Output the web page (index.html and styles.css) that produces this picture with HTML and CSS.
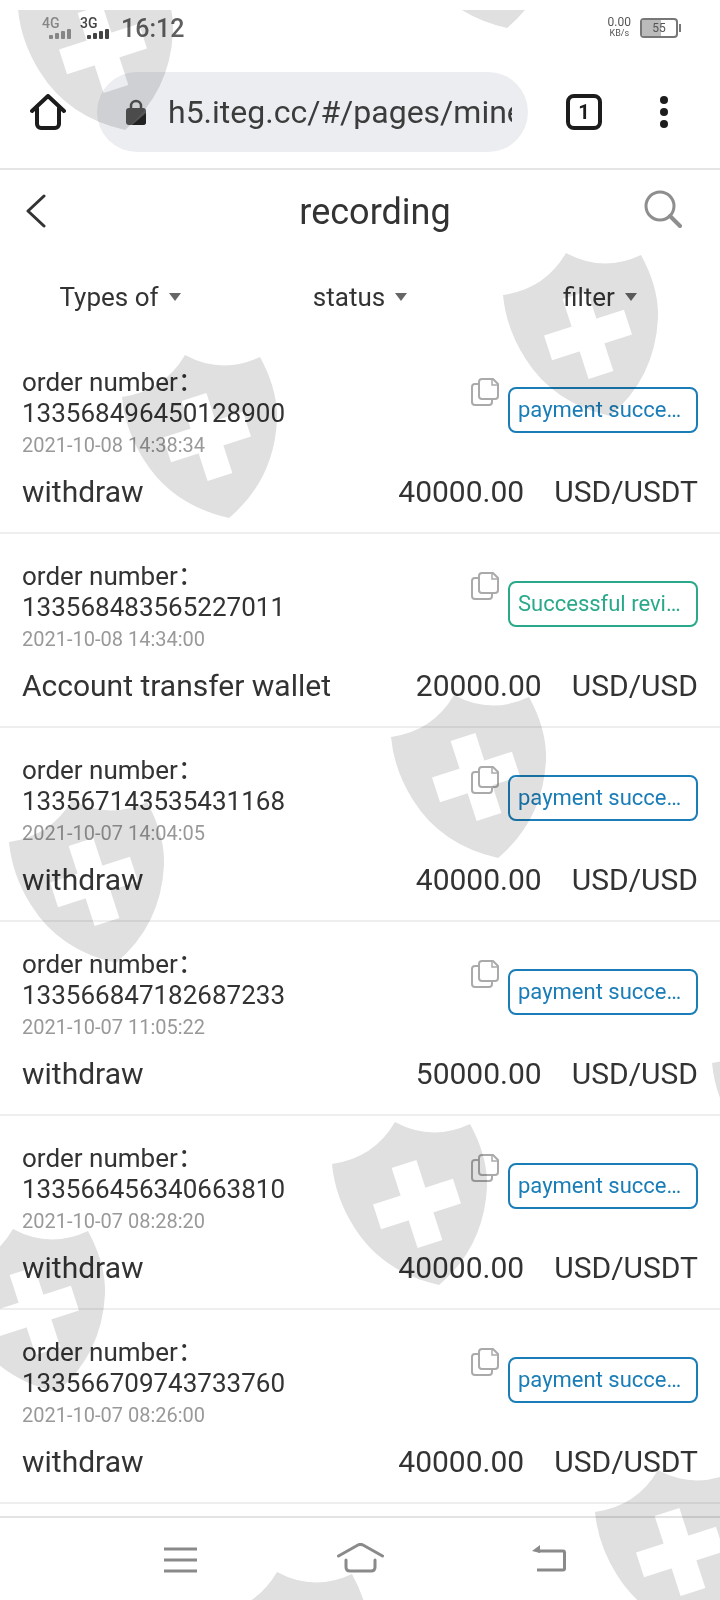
FILE: index.html
```html
<!DOCTYPE html>
<html lang="en">

<head>
  <meta charset="UTF-8">
  <title>recording</title>
  <link rel="stylesheet" href="styles.css">
</head>

<body>
  <svg class="defs" width="0" height="0">
    <symbol id="shield" viewBox="0 0 155 163">
      <path fill="#e0e0e0" d="M63 0 Q100 20 138 2 Q156 35 155 65 Q152 125 107 163 Q50 150 22 105 Q3 75 0 42 Q42 36 63 0Z" />
      <g transform="rotate(-18 85 82)" fill="#fff">
        <rect x="43" y="69" width="84" height="26" />
        <rect x="72" y="40" width="26" height="84" />
      </g>
    </symbol>
    <symbol id="copy" viewBox="0 0 28 28">
      <path fill="none" stroke="#aaa" stroke-width="2" stroke-linejoin="round" d="M9 6H4a3 3 0 0 0-3 3v15a3 3 0 0 0 3 3h14a3 3 0 0 0 3-3v-3" />
      <path fill="#fff" stroke="#aaa" stroke-width="2" stroke-linejoin="round" d="M11 1h11l5 5v12a3 3 0 0 1-3 3H11a3 3 0 0 1-3-3V4a3 3 0 0 1 3-3Z" />
      <path fill="none" stroke="#aaa" stroke-width="1.5" d="M21 1v6h6" />
    </symbol>
  </svg>

  <div class="page">
    <header class="chrome">
      <div class="status">
        <div class="signal signal-dim">
          <span class="net">4G</span>
          <span class="bars"><i></i><i></i><i></i><i></i></span>
        </div>
        <div class="signal">
          <span class="net">3G</span>
          <span class="bars"><i></i><i></i><i></i><i></i></span>
        </div>
        <span class="clock">16:12</span>
        <div class="speed"><span>0.00</span><small>KB/s</small></div>
        <div class="battery"><span class="battery-level"></span><span class="battery-text">55</span></div>
      </div>
      <div class="urlrow">
        <svg class="home-icon" viewBox="0 0 36 36">
          <path fill="none" stroke="#1c1c1c" stroke-width="4" stroke-linecap="round" stroke-linejoin="round" d="M2 17 18 2l16 15M7 14v16a4 4 0 0 0 4 4h14a4 4 0 0 0 4-4V14" />
        </svg>
        <div class="url">
          <svg class="lock" viewBox="0 0 20 26">
            <path fill="none" stroke="#555" stroke-width="2.5" d="M5 11V7a5 5 0 0 1 10 0v4" />
            <rect y="9" width="20" height="17" rx="3" fill="#555" />
            <path fill="#222" d="M20 14v9a3 3 0 0 1-3 3H6Z" />
          </svg>
          <span class="url-text">h5.iteg.cc/#/pages/mine</span>
        </div>
        <div class="tabs">1</div>
        <div class="dots"><i></i><i></i><i></i></div>
      </div>
    </header>

    <div class="titlebar">
      <svg class="back" viewBox="0 0 20 34">
        <path fill="none" stroke="#333" stroke-width="3" stroke-linecap="round" stroke-linejoin="round" d="M18 2 2 17l16 15" />
      </svg>
      <h1>recording</h1>
      <svg class="search" viewBox="0 0 38 38">
        <circle cx="16" cy="16" r="14" fill="none" stroke="#8e8e8e" stroke-width="3" />
        <path stroke="#8e8e8e" stroke-width="4" stroke-linecap="round" d="m26 26 10 10" />
      </svg>
    </div>

    <div class="filters">
      <div class="filter">Types of<i class="caret"></i></div>
      <div class="filter">status<i class="caret"></i></div>
      <div class="filter">filter<i class="caret"></i></div>
    </div>

    <main class="list">
      <article class="row">
        <div class="row-top">
          <div class="order">
            <div>order number：</div>
            <div>133568496450128900</div>
            <div class="date">2021-10-08 14:38:34</div>
          </div>
          <svg class="copy"><use href="#copy" /></svg>
          <div class="badge badge-blue">payment successful</div>
        </div>
        <div class="row-bottom">
          <span class="kind">withdraw</span>
          <span class="amount">40000.00</span>
          <span class="unit">USD/USDT</span>
        </div>
      </article>
      <article class="row">
        <div class="row-top">
          <div class="order">
            <div>order number：</div>
            <div>133568483565227011</div>
            <div class="date">2021-10-08 14:34:00</div>
          </div>
          <svg class="copy"><use href="#copy" /></svg>
          <div class="badge badge-green">Successful review</div>
        </div>
        <div class="row-bottom">
          <span class="kind">Account transfer wallet</span>
          <span class="amount">20000.00</span>
          <span class="unit">USD/USD</span>
        </div>
      </article>
      <article class="row">
        <div class="row-top">
          <div class="order">
            <div>order number：</div>
            <div>133567143535431168</div>
            <div class="date">2021-10-07 14:04:05</div>
          </div>
          <svg class="copy"><use href="#copy" /></svg>
          <div class="badge badge-blue">payment successful</div>
        </div>
        <div class="row-bottom">
          <span class="kind">withdraw</span>
          <span class="amount">40000.00</span>
          <span class="unit">USD/USD</span>
        </div>
      </article>
      <article class="row">
        <div class="row-top">
          <div class="order">
            <div>order number：</div>
            <div>133566847182687233</div>
            <div class="date">2021-10-07 11:05:22</div>
          </div>
          <svg class="copy"><use href="#copy" /></svg>
          <div class="badge badge-blue">payment successful</div>
        </div>
        <div class="row-bottom">
          <span class="kind">withdraw</span>
          <span class="amount">50000.00</span>
          <span class="unit">USD/USD</span>
        </div>
      </article>
      <article class="row">
        <div class="row-top">
          <div class="order">
            <div>order number：</div>
            <div>133566456340663810</div>
            <div class="date">2021-10-07 08:28:20</div>
          </div>
          <svg class="copy"><use href="#copy" /></svg>
          <div class="badge badge-blue">payment successful</div>
        </div>
        <div class="row-bottom">
          <span class="kind">withdraw</span>
          <span class="amount">40000.00</span>
          <span class="unit">USD/USDT</span>
        </div>
      </article>
      <article class="row">
        <div class="row-top">
          <div class="order">
            <div>order number：</div>
            <div>133566709743733760</div>
            <div class="date">2021-10-07 08:26:00</div>
          </div>
          <svg class="copy"><use href="#copy" /></svg>
          <div class="badge badge-blue">payment successful</div>
        </div>
        <div class="row-bottom">
          <span class="kind">withdraw</span>
          <span class="amount">40000.00</span>
          <span class="unit">USD/USDT</span>
        </div>
      </article>
    </main>

    <nav class="softkeys">
      <svg class="key-menu" viewBox="0 0 33 26">
        <path stroke="#8a8a8a" stroke-width="3" d="M0 2h33M0 13h33M0 24h33" />
      </svg>
      <svg class="key-home" viewBox="0 0 47 30">
        <path fill="none" stroke="#8a8a8a" stroke-width="3" stroke-linecap="round" stroke-linejoin="round" d="M1.500 13 21 2q2.500-1.200 5 0l19.500 11M9 17v7q0 4 4 4h21q4 0 4-4v-7" />
      </svg>
      <svg class="key-back" viewBox="0 0 34 27">
        <path fill="none" stroke="#8a8a8a" stroke-width="3" d="M6 6h25q1.500 0 1.500 1.500v16q0 1.500-1.500 1.500H5" />
        <path fill="#8a8a8a" d="M0 6 8 0v8Z" />
      </svg>
    </nav>

    <div class="watermarks">
      <svg class="mark mark-1"><use href="#shield" /></svg>
      <svg class="mark mark-2"><use href="#shield" /></svg>
      <svg class="mark mark-3"><use href="#shield" /></svg>
      <svg class="mark mark-4"><use href="#shield" /></svg>
      <svg class="mark mark-5"><use href="#shield" /></svg>
      <svg class="mark mark-6"><use href="#shield" /></svg>
      <svg class="mark mark-7"><use href="#shield" /></svg>
      <svg class="mark mark-8"><use href="#shield" /></svg>
      <svg class="mark mark-9"><use href="#shield" /></svg>
      <svg class="mark mark-10"><use href="#shield" /></svg>
      <svg class="mark mark-11"><use href="#shield" /></svg>
    </div>
  </div>
</body>

</html>
```

FILE: styles.css
```css
* {
  box-sizing: border-box;
}

body {
  margin: 0;
  font-family: Roboto, "Noto Sans CJK SC", sans-serif;
  color: #333;
  background-color: #fff;
}

.defs {
  position: absolute;
}

.page {
  position: relative;
  display: flex;
  flex-direction: column;
  width: 720px;
  height: 1600px;
  overflow: hidden;
}

/* browser chrome */
.chrome {
  flex: none;
  height: 170px;
  border-bottom: 2px solid #e5e5e5;
}

.status {
  display: flex;
  align-items: center;
  height: 60px;
  padding-bottom: 4px;
  padding-left: 42px;
  padding-right: 42px;
}

.signal {
  display: flex;
  flex-direction: column;
  width: 38px;
  color: #444;
}

.signal-dim {
  color: #999;
}

.net {
  font-size: 14px;
  font-weight: 500;
  line-height: 12px;
}

.bars {
  display: flex;
  align-items: flex-end;
  gap: 2px;
  height: 10px;
  margin-left: 7px;
}

.bars i {
  width: 4px;
  border-radius: 1px;
  background-color: currentColor;
}

.bars i:nth-child(1) {
  height: 4px;
}

.bars i:nth-child(2) {
  height: 6px;
}

.bars i:nth-child(3) {
  height: 8px;
}

.bars i:nth-child(4) {
  height: 10px;
}

.clock {
  margin-left: 3px;
  font-size: 25px;
  font-weight: 500;
  color: #5f5f5f;
}

.speed {
  display: flex;
  flex-direction: column;
  align-items: center;
  margin-left: auto;
  margin-right: 9px;
  font-size: 12px;
  line-height: 11px;
  color: #555;
}

.speed small {
  font-size: 9px;
}

.battery {
  position: relative;
  width: 38px;
  height: 20px;
  border: 2px solid #777;
  border-radius: 4px;
  font-size: 12px;
  line-height: 16px;
  text-align: center;
  color: #555;
}

.battery::after {
  content: "";
  position: absolute;
  top: 4px;
  right: -5px;
  width: 2px;
  height: 8px;
  background-color: #777;
}

.battery-level {
  position: absolute;
  top: 0;
  bottom: 0;
  left: 0;
  width: 55%;
  background-color: #bbb;
}

.battery-text {
  position: relative;
}

.urlrow {
  display: flex;
  align-items: center;
  height: 108px;
  padding-bottom: 4px;
  padding-left: 30px;
}

.home-icon {
  width: 36px;
  height: 36px;
}

.url {
  display: flex;
  align-items: center;
  width: 431px;
  height: 80px;
  margin-left: 31px;
  padding-left: 29px;
  padding-right: 16px;
  border-radius: 40px;
  background-color: #ecedf1;
}

.lock {
  flex: none;
  width: 20px;
  height: 26px;
}

.url-text {
  margin-left: 22px;
  overflow: hidden;
  font-size: 32px;
  white-space: nowrap;
  color: #3c3c3c;
}

.tabs {
  width: 36px;
  height: 36px;
  margin-left: 38px;
  border: 4px solid #1c1c1c;
  border-radius: 8px;
  font-size: 20px;
  font-weight: 700;
  line-height: 28px;
  text-align: center;
  color: #1c1c1c;
}

.dots {
  display: flex;
  flex-direction: column;
  gap: 4px;
  margin-left: 58px;
}

.dots i {
  width: 8px;
  height: 8px;
  border-radius: 50%;
  background-color: #1c1c1c;
}

/* page header */
.titlebar {
  flex: none;
  position: relative;
  display: flex;
  align-items: center;
  justify-content: center;
  height: 84px;
  padding-left: 30px;
}

h1 {
  margin: 0;
  font-size: 36px;
  font-weight: 400;
}

.back {
  position: absolute;
  top: 24px;
  left: 26px;
  width: 20px;
  height: 34px;
}

.search {
  position: absolute;
  top: 20px;
  left: 644px;
  width: 38px;
  height: 38px;
}

.filters {
  flex: none;
  display: grid;
  grid-template-columns: repeat(3, 1fr);
  align-items: center;
  height: 86px;
}

.filter {
  display: flex;
  align-items: center;
  justify-content: center;
  gap: 10px;
  font-size: 26px;
}

.caret {
  width: 0;
  height: 0;
  border-top: 8px solid #666;
  border-left: 6px solid transparent;
  border-right: 6px solid transparent;
}

/* records */
.list {
  flex: 1;
  min-height: 0;
}

.row {
  height: 194px;
  padding: 27px 22px 0;
  border-bottom: 2px solid #eee;
}

.row-top {
  display: flex;
  align-items: flex-start;
}

.order {
  flex: 1;
  font-size: 26px;
  line-height: 31px;
}

.date {
  margin-top: 2px;
  font-size: 20px;
  line-height: 28px;
  color: #999;
}

.copy {
  flex: none;
  width: 28px;
  height: 28px;
  margin-top: 11px;
  margin-right: 9px;
}

.badge {
  flex: none;
  width: 190px;
  height: 46px;
  margin-top: 20px;
  padding: 0 8px;
  border: 2px solid;
  border-radius: 8px;
  overflow: hidden;
  font-size: 22px;
  line-height: 41px;
  white-space: nowrap;
  text-overflow: ellipsis;
}

.badge-blue {
  color: #1a7db8;
}

.badge-green {
  color: #2aa98a;
}

.row-bottom {
  display: flex;
  align-items: center;
  height: 36px;
  margin-top: 14px;
  font-size: 30px;
}

.kind {
  flex: 1;
}

.unit {
  margin-left: 30px;
}

/* android soft keys */
.softkeys {
  flex: none;
  position: relative;
  height: 84px;
  border-top: 2px solid #e3e3e3;
}

.softkeys svg {
  position: absolute;
}

.key-menu {
  top: 29px;
  left: 164px;
  width: 33px;
  height: 26px;
}

.key-home {
  top: 25px;
  left: 337px;
  width: 47px;
  height: 30px;
}

.key-back {
  top: 27px;
  left: 532px;
  width: 34px;
  height: 27px;
}

/* watermark shields, drawn over everything */
.watermarks {
  position: absolute;
  top: 10px;
  left: 0;
  right: 0;
  bottom: 0;
  overflow: hidden;
  mix-blend-mode: multiply;
  pointer-events: none;
}

.mark {
  position: absolute;
  width: 155px;
  height: 163px;
}

.mark-1 {
  top: -43px;
  left: 18px;
}

.mark-2 {
  top: -145px;
  left: 400px;
}

.mark-3 {
  top: 345px;
  left: 122px;
}

.mark-4 {
  top: 243px;
  left: 503px;
}

.mark-5 {
  top: 685px;
  left: 391px;
}

.mark-6 {
  top: 790px;
  left: 9px;
}

.mark-7 {
  top: 1112px;
  left: 332px;
}

.mark-8 {
  top: 1219px;
  left: -50px;
}

.mark-9 {
  top: 1011px;
  left: 712px;
}

.mark-10 {
  top: 1460px;
  left: 595px;
}

.mark-11 {
  top: 1562px;
  left: 214px;
}
```
